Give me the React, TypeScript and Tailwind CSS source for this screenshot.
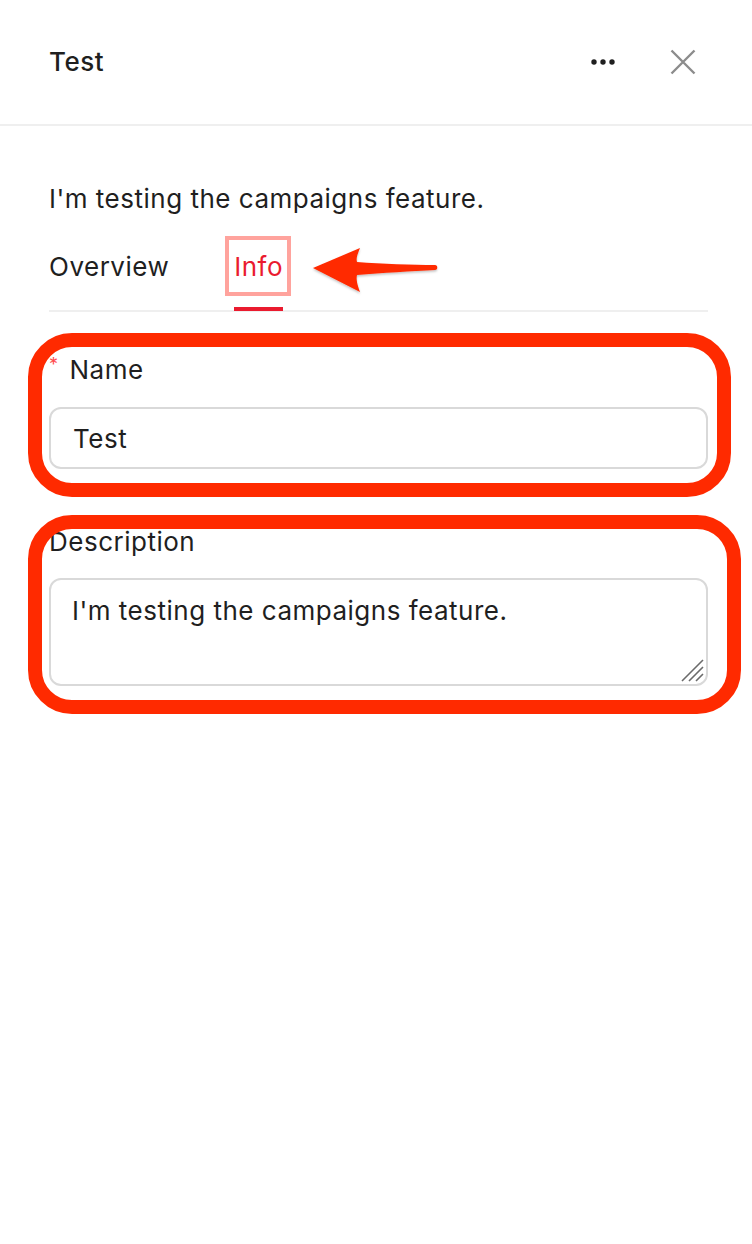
import React from "react";

const Dots = () => (
  <svg width="26" height="8" viewBox="0 0 26 8" fill="#1f1f1f">
    <circle cx="4" cy="4" r="2.7" />
    <circle cx="13" cy="4" r="2.7" />
    <circle cx="22" cy="4" r="2.7" />
  </svg>
);

const CloseIcon = () => (
  <svg width="26" height="26" viewBox="0 0 26 26" stroke="#8c8c8c" strokeWidth="2.4" fill="none">
    <path d="M1.5 1.5 L24.5 24.5 M24.5 1.5 L1.5 24.5" />
  </svg>
);

// red pointer arrow used in the annotation
const Arrow = () => (
  <svg width="130" height="50" viewBox="0 0 130 50">
    <defs>
      <filter id="sh" x="-10%" y="-20%" width="130%" height="150%">
        <feDropShadow dx="0" dy="1.5" stdDeviation="1.2" floodColor="#000" floodOpacity="0.25" />
      </filter>
    </defs>
    <path
      d="M1 22 L48 2 C45 9 44 13 45 16 C70 18 100 19 123 19 C126 19 126 24 123 24 C100 25 70 27 45 29 C44 33 45 38 48 46 Z"
      fill="#ff2a00"
      filter="url(#sh)"
    />
  </svg>
);

const ResizeHandle = () => (
  <svg width="24" height="24" viewBox="0 0 24 24" stroke="#6b6b6b" strokeWidth="1.6">
    <path d="M2 23 L23 2 M9 23 L23 9 M16 23 L23 16" />
  </svg>
);

export default function App() {
  return (
    <div className="min-h-[1244px] bg-white font-['Inter',sans-serif] text-[26px] leading-[32px] tracking-[0.5px] text-[#1f1f1f]">
      <header className="flex h-[126px] items-center justify-between border-b-2 border-[#efefef] pl-[49px] pr-[56px]">
        <h1 className="font-medium">Test</h1>
        <div className="flex items-center gap-[54px]">
          <Dots />
          <CloseIcon />
        </div>
      </header>

      <div className="pl-[49px] pr-[44px]">
        <p className="pt-[57px]">I'm testing the campaigns feature.</p>

        <div className="mt-[36px] flex gap-[65px] border-b-2 border-[#efefef]">
          <div className="pb-[27px]">Overview</div>
          <div className="relative pb-[27px] text-[#ea1b2f]">
            Info
            <div className="absolute bottom-[-1px] left-0 right-0 h-[4px] bg-[#ea1b2f]" />
            <div className="absolute left-[-9px] right-[-8px] top-[-15px] bottom-[14px] border-[4px] border-[#ffa39d]" />
            <div className="absolute left-[78px] top-[-5px]">
              <Arrow />
            </div>
          </div>
        </div>

        <div className="relative mt-[42px]">
          <label className="flex items-start gap-[11px]">
            <span className="mt-[-5px] text-[18px] text-[#ff4d4f]">*</span>
            <span>Name</span>
          </label>
          <input
            readOnly
            defaultValue="Test"
            className="mt-[21px] block h-[62px] w-full rounded-[12px] border-2 border-[#d9d9d9] bg-white px-[22px] outline-none"
          />
          <div className="pointer-events-none absolute bottom-[-28px] left-[-21px] right-[-23px] top-[-21px] rounded-[44px] border-[14px] border-[#ff2a00]" />
        </div>

        <div className="relative mt-[57px]">
          <label className="block">Description</label>
          <div className="relative mt-[20px]">
            <textarea
              readOnly
              defaultValue="I'm testing the campaigns feature."
              className="block h-[108px] w-full resize-none rounded-[12px] border-2 border-[#d9d9d9] bg-white px-[21px] pt-[15px] outline-none"
            />
            <div className="absolute bottom-[4px] right-[4px]">
              <ResizeHandle />
            </div>
          </div>
          <div className="pointer-events-none absolute bottom-[-28px] left-[-21px] right-[-33px] top-[-11px] rounded-[44px] border-[14px] border-[#ff2a00]" />
        </div>
      </div>
    </div>
  );
}
